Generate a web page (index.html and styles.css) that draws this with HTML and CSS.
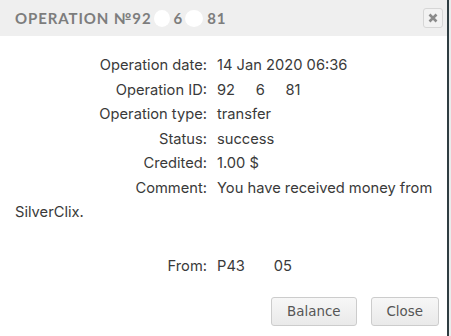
FILE: index.html
```html
<!DOCTYPE html>
<html>
<head>
<meta charset="utf-8">
<link rel="stylesheet" href="styles.css">
</head>
<body>
<div class="frame">
  <div class="dialog">
    <div class="header">
      <div class="title">OPERATION №92<span class="blob b1"></span>6<span class="blob b2"></span>81</div>
      <button class="x" aria-label="close">
        <svg width="10" height="10" viewBox="0 0 10 10"><path d="M1.5 1.5 L8.5 8.5 M8.5 1.5 L1.5 8.5" stroke="#8a8a8a" stroke-width="2.6" stroke-linecap="butt"/></svg>
      </button>
    </div>
    <div class="content">
      <div class="row"><span class="lbl">Operation date:</span><span class="val">14 Jan 2020 06:36</span></div>
      <div class="row"><span class="lbl">Operation ID:</span><span class="val">92&nbsp;&nbsp;&nbsp;&nbsp;&nbsp;6&nbsp;&nbsp;&nbsp;&nbsp;&nbsp;81</span></div>
      <div class="row"><span class="lbl">Operation type:</span><span class="val">transfer</span></div>
      <div class="row"><span class="lbl">Status:</span><span class="val">success</span></div>
      <div class="row"><span class="lbl">Credited:</span><span class="val">1.00 $</span></div>
      <div class="row"><span class="lbl">Comment:</span><span class="val">You have received money from SilverClix.</span></div>
      <div class="row spacer">&nbsp;</div>
      <div class="row"><span class="lbl">From:</span><span class="val">P43&nbsp;&nbsp;&nbsp;&nbsp;&nbsp;&nbsp;&nbsp;05</span></div>
    </div>
    <div class="footer">
      <button class="btn">Balance</button>
      <button class="btn">Close</button>
    </div>
  </div>
</div>
</body>
</html>
```
FILE: styles.css
```css
html, body {
  margin: 0;
  padding: 0;
  background: #ffffff;
}
.frame {
  width: 451px;
  height: 336px;
  display: flex;
  background: #e9ecec;
}
.dialog {
  width: 447px;
  height: 336px;
  background: #ffffff;
  border-right: 2px solid #2f3d42;
  display: flex;
  flex-direction: column;
}
.header {
  height: 36px;
  background: #efefef;
  display: flex;
  align-items: center;
  justify-content: space-between;
  padding: 0 4px 0 15px;
}
.title {
  font-family: "Lato", sans-serif;
  font-weight: 700;
  font-size: 15px;
  letter-spacing: 0.9px;
  color: #7d7d7d;
  display: flex;
  align-items: center;
}
.blob {
  display: inline-block;
  background: #ffffff;
  border-radius: 50%;
  height: 17px;
}
.b1 { width: 16px; margin: 0 4px 0 2px; }
.b2 { width: 18px; margin: 0 4px 0 2px; }
.x {
  width: 20px;
  height: 20px;
  padding: 0;
  border: 1px solid #d6d6d6;
  border-radius: 3px;
  background: #f2f2f2;
  display: flex;
  align-items: center;
  justify-content: center;
}
.content {
  padding: 17px 6px 0 15px;
  font-family: "Inter", sans-serif;
  font-size: 14.7px;
  color: #3a3a3a;
  line-height: 24.5px;
}
.spacer {
  height: 29px;
}
.lbl {
  display: inline-block;
  width: 192px;
  text-align: right;
  padding-right: 10px;
}
.footer {
  margin-top: auto;
  display: flex;
  justify-content: flex-end;
  gap: 14px;
  padding: 0 8px 10px 0;
}
.btn {
  height: 29px;
  padding: 0 15px;
  font-family: "DejaVu Sans", sans-serif;
  font-size: 13.4px;
  color: #555555;
  border: 1px solid #cccccc;
  border-radius: 3px;
  background: linear-gradient(#f7f7f7, #e9e9e9);
}
```
